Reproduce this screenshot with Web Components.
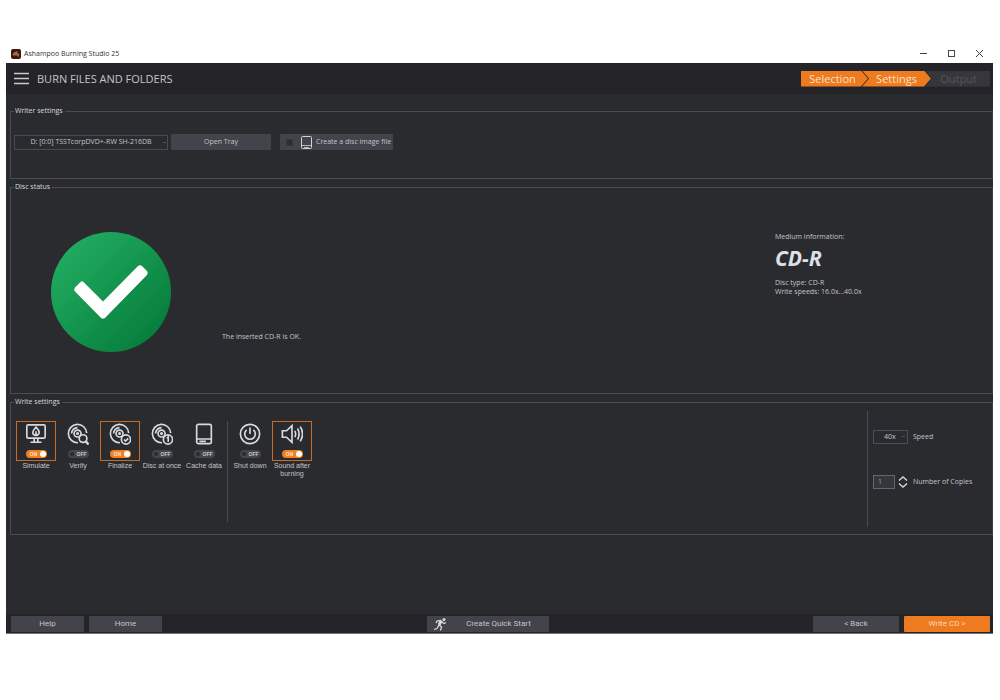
<!DOCTYPE html>
<html lang="en">
<head>
<meta charset="utf-8">
<title>Ashampoo Burning Studio 25</title>
<style>
  :root {
    --bg: #2a2b2f;
    --bar: #242428;
    --line: #4b4c51;
    --button: #42434b;
    --accent: #ee7b20;
    --text: #c3c4ca;
    --ui: "Open Sans", "Noto Sans", sans-serif;
    --control: Roboto, "Liberation Sans", sans-serif;
  }
  body { margin: 0; background: #fff; font: 7px/10px var(--ui); color: var(--text); }
</style>
</head>
<body>
<burn-window></burn-window>

<script>
const define = (name, html, setup) => {
  const template = document.createElement("template");
  template.innerHTML = html;
  customElements.define(name, class extends HTMLElement {
    constructor() {
      super();
      this.attachShadow({ mode: "open" }).append(template.content.cloneNode(true));
    }
    connectedCallback() {
      if (setup) setup(this, this.shadowRoot);
    }
  });
};

const ICONS = {
  simulate: `<rect x="2" y="2" width="20" height="14.5" rx="1.5"/><path d="M10 16.5v4M14 16.5v4M6 21h12"/><path d="M12 4.5c2.5 2.500 3.500 4 3.500 5.500a3.500 3.500 0 0 1-7 0c0-1.500 1.500-3 3.500-5.500z"/><path d="M12 9v4"/>`,
  verify: `<path d="M12 21.500A10 10 0 1 1 21.500 11"/><circle cx="11.500" cy="11.500" r="3.800"/><circle cx="11.500" cy="11.500" r=".8"/><path d="M5 11.500a6.500 6.500 0 0 1 6.500-6.500"/><circle cx="17.500" cy="17" r="4.200"/><path d="M20.500 20l3 3.500" stroke-width="2.600"/>`,
  finalize: `<path d="M12 21.500A10 10 0 1 1 21.500 11"/><circle cx="11.500" cy="11.500" r="3.800"/><circle cx="11.500" cy="11.500" r=".8"/><path d="M5 11.500a6.500 6.500 0 0 1 6.500-6.500"/><circle cx="18.500" cy="18" r="5"/><path d="M16.300 18l1.700 1.700 3-3"/>`,
  once: `<path d="M12 21.500A10 10 0 1 1 21.500 11"/><circle cx="11.500" cy="11.500" r="3.800"/><circle cx="11.500" cy="11.500" r=".8"/><path d="M5 11.500a6.500 6.500 0 0 1 6.500-6.500"/><circle cx="18.500" cy="18" r="5"/><path d="M17.300 16.500l1.500-1.200v5.400"/>`,
  cache: `<rect x="4" y="1.500" width="16" height="21" rx="2"/><path d="M4 17.500h16M7 20h7"/>`,
  power: `<circle cx="12" cy="12" r="10.500"/><path d="M12 5v7M8.300 7.500a5.800 5.800 0 1 0 7.400 0"/>`,
  sound: `<path d="M1.500 8.500h4.500l6-5.500v18l-6-5.500H1.500z"/><path d="M15 8.500q2 3.500 0 7M18 6q3.500 6 0 12M21 4q5 8 0 16"/>`
};

define("title-bar", `
<style>
  :host { display: flex; align-items: center; height: 19px; padding: 0 0 0 5px; background: #fff; color: #333; }
  svg { display: block; }
  h1 { flex: 1; margin: 0 0 0 3px; font: inherit; }
  button { width: 28px; height: 19px; padding: 0; border: 0; background: none; display: grid; place-items: center; }
</style>
<svg width="10" height="10" viewBox="0 0 10 10" aria-hidden="true"><rect width="10" height="10" rx="2" fill="#3a1a10"/><path d="M2 7q-1-3 2-4l2-1q0 2 2 3 1 2-1 3l-1-2-1 1-1-1z" fill="#b5653a"/></svg>
<h1>Ashampoo Burning Studio 25</h1>
<button aria-label="Minimize"><svg width="9" height="9" viewBox="0 0 9 9"><path d="M1 4.500h7" stroke="#444"/></svg></button>
<button aria-label="Maximize"><svg width="9" height="9" viewBox="0 0 9 9"><rect x="1.500" y="1.500" width="6" height="6" fill="none" stroke="#444"/></svg></button>
<button aria-label="Close"><svg width="9" height="9" viewBox="0 0 9 9"><path d="M1 1l7 7M8 1l-7 7" stroke="#444"/></svg></button>
`);

define("wizard-step", `
<style>
  :host { display: block; font-size: 11px; line-height: 16px; }
  a { display: grid; place-items: center; height: 16px; width: 67px; margin-right: -6px; padding-right: 4px; box-sizing: border-box;
      background: var(--accent); color: #fbe0c6; text-decoration: none;
      clip-path: polygon(0 0, calc(100% - 7px) 0, 100% 50%, calc(100% - 7px) 100%, 0 100%); }
  :host([middle]) a { width: 69px; padding: 0; clip-path: polygon(0 0, calc(100% - 7px) 0, 100% 50%, calc(100% - 7px) 100%, 0 100%, 7px 50%); }
  :host([last]) a { width: 65px; margin-right: 0; padding: 0 0 0 2px; background: #36373d; color: #54555b;
      clip-path: polygon(0 0, 100% 0, 100% 100%, 0 100%, 7px 50%); }
</style>
<a href="#"><slot></slot></a>
`);

define("app-header", `
<style>
  :host { display: flex; align-items: center; height: 31px; padding: 0 3px 0 8px; background: var(--bar); }
  .menu { width: 15px; height: 13px; padding: 0; border: 0; background: none; }
  svg { display: block; }
  h2 { flex: 1; margin: 0 0 0 8px; font-size: 11px; line-height: 16px; font-weight: 400; }
  nav { display: flex; }
</style>
<button class="menu" aria-label="Menu"><svg width="15" height="13" viewBox="0 0 15 13"><path d="M0 1.500h15M0 6.500h15M0 11.500h15" stroke="#c9c9d0" stroke-width="1.400"/></svg></button>
<h2>BURN FILES AND FOLDERS</h2>
<nav><wizard-step>Selection</wizard-step><wizard-step middle>Settings</wizard-step><wizard-step last>Output</wizard-step></nav>
`);

define("setting-group", `
<style>
  :host { display: block; margin-left: 4px; }
  fieldset { margin: 0; padding: 0 0 0 3px; border: 1px solid var(--line); border-right-color: #3c3d42; min-width: 0; box-sizing: border-box; min-height: var(--group-height); }
  legend { padding: 0 2px 0 1px; line-height: 10px; color: #d8d9de; }
</style>
<fieldset><legend></legend><slot></slot></fieldset>
`, (el, root) => { root.querySelector("legend").textContent = el.getAttribute("label"); });

define("push-button", `
<style>
  :host { display: block; }
  button { display: grid; grid-template-columns: 1fr; place-items: center; width: 100%; height: 16px; padding: 0; border: 0; border-radius: 1px;
           background: var(--button); color: var(--text); font: 8px/10px var(--control); }
  :host([plain]) button { font: 7px/10px var(--ui); }
  :host([primary]) button { background: var(--accent); color: #fbd9ba; }
  :host([icon]) button { grid-template-columns: 26px 1fr; padding-right: 4px; }
</style>
<button><slot name="icon"></slot><slot></slot></button>
`);

define("drive-panel", `
<style>
  :host { display: flex; align-items: center; padding-top: 18px; }
  select { appearance: none; width: 154px; height: 15px; margin: 0; padding: 0 14px; border: 1px solid #4a4b51; border-radius: 0;
           color: var(--text); font: 7px/10px var(--ui); text-align: center; text-align-last: center;
           background: linear-gradient(#55565c, #55565c) 148px 6px / 3px 1px no-repeat var(--bg); }
  push-button { width: 100px; margin-left: 3px; }
  label { display: flex; align-items: center; height: 16px; margin-left: 9px; padding: 0 2px 0 6px; border-radius: 1px; background: var(--button); }
  input { appearance: none; width: 7px; height: 7px; margin: 0 8px 0 0; background: #2e2f34; border: 1px solid #37383d; }
  svg { margin-right: 4px; }
</style>
<select aria-label="Drive"><option>D: [0:0] TSSTcorpDVD+-RW SH-216DB</option></select>
<push-button plain>Open Tray</push-button>
<label><input type="checkbox"><svg width="11" height="13" viewBox="0 0 11 13" fill="none" stroke="#d2d3d8"><rect x=".5" y=".5" width="10" height="12" rx="1"/><path d="M1 9.500h9M3 11.500h5" stroke-width=".8"/></svg>Create a disc image file</label>
`);

define("disc-status", `
<style>
  :host { display: flex; padding: 40px 0 0 37px; }
  svg { display: block; flex: none; }
  p { margin: 0; }
  .message { flex: 1; align-self: flex-end; margin-left: 51px; padding-bottom: 10px; }
  .info { width: 217px; line-height: 9px; }
  strong { display: block; margin: 4px 0 7px; font: italic 700 21px/26px "Noto Sans", var(--ui); color: #dfe0e6; }
</style>
<svg width="120" height="120" viewBox="0 0 120 120" role="img" aria-label="OK">
  <defs><linearGradient id="g" x1="0" y1="0" x2="1" y2="1"><stop offset=".1" stop-color="#21ad61"/><stop offset=".9" stop-color="#067c3a"/></linearGradient></defs>
  <circle cx="60" cy="60" r="60" fill="url(#g)"/>
  <path d="M28 54L52 80 93 39" fill="none" stroke="#04662d" stroke-opacity=".25" stroke-width="13"/>
  <path d="M24 55.500l5.500-5.500q1.500-1.300 3 0L52 69.500 87 34q2-1.500 4 0l5 5q1.500 2 0 4L54 86q-2 1.500-4 0L24 59.500q-1.500-2 0-4z" fill="#fff"/>
</svg>
<p class="message">The inserted CD-R is OK.</p>
<div class="info"><p>Medium information:</p><strong>CD-R</strong><p>Disc type: CD-R</p><p>Write speeds: 16.0x...40.0x</p></div>
`);

define("option-tile", `
<style>
  :host { display: block; width: 42px; }
  label { display: flex; flex-direction: column; align-items: center; }
  .frame { position: relative; box-sizing: border-box; width: 40px; height: 40px; padding-top: 1px; border: 1px solid transparent;
           display: flex; flex-direction: column; align-items: center; gap: 5px; }
  :host([on]) .frame { border-color: #c96b22; }
  svg { display: block; fill: none; stroke: #d9dae0; stroke-width: 1.8; }
  input { position: absolute; inset: 0; width: 100%; height: 100%; margin: 0; opacity: 0; }
  .pill { box-sizing: border-box; width: 21px; height: 8px; padding: 0 2px; border-radius: 4px; background: #44454d; color: #c8c9cf;
          display: flex; align-items: center; justify-content: space-between; font: 700 5px/8px "Liberation Sans", sans-serif; }
  .pill::before { content: ""; width: 4px; height: 4px; border-radius: 50%; background: #2a2b2f; }
  :host([on]) .pill { flex-direction: row-reverse; padding: 0 1px 0 4px; background: #f08020; color: #ffe3c8; }
  :host([on]) .pill::before { width: 6px; height: 6px; background: #fff; }
  .name { width: 40px; margin-top: 1px; font: 7px/8px "Liberation Sans", sans-serif; text-align: center; }
</style>
<label><span class="frame"><svg width="22" height="22" viewBox="0 0 24 24" aria-hidden="true"></svg><span class="pill"><span class="state"></span></span><input type="checkbox"></span><span class="name"><slot></slot></span></label>
`, (el, root) => {
  const on = el.hasAttribute("on");
  root.querySelector("svg").innerHTML = ICONS[el.getAttribute("icon")];
  root.querySelector(".state").textContent = on ? "ON" : "OFF";
  const box = root.querySelector("input");
  box.checked = on;
  box.onchange = () => {
    el.toggleAttribute("on", box.checked);
    root.querySelector(".state").textContent = box.checked ? "ON" : "OFF";
  };
});

define("write-options", `
<style>
  :host { display: flex; padding: 4px 0 6px; }
  .tiles { flex: 1; display: flex; padding: 10px 0 5px 1px; }
  .rest { display: flex; margin-left: 2px; padding-left: 1px; border-left: 1px solid var(--line); }
  .side { box-sizing: border-box; width: 125px; min-height: 116px; padding: 18px 0 0 5px; border-left: 1px solid var(--line);
          display: grid; grid-template-columns: 35px 1fr; grid-auto-rows: 15px; align-content: start; align-items: center; gap: 30px 5px; }
  select { appearance: none; box-sizing: border-box; width: 35px; height: 14px; padding: 0 8px 0 10px; margin: 0; border: 1px solid #4c4d57; border-radius: 0;
           background: linear-gradient(#55565c, #55565c) 28px 5px / 3px 1px no-repeat #2a2b32; color: var(--text); font: 7px/10px var(--ui); }
  .count { display: flex; align-items: center; gap: 3px; }
  input { appearance: none; box-sizing: border-box; width: 22px; height: 14px; padding: 0 4px; border: 1px solid #65666b; border-radius: 0; background: #36373c; color: #a2a3a8; font: 7px/10px var(--ui); }
  .spin { display: grid; gap: 2px; }
  .spin button { display: block; height: 5px; padding: 0; border: 0; background: none; }
  svg { display: block; }
</style>
<div class="tiles">
  <option-tile icon="simulate" on>Simulate</option-tile>
  <option-tile icon="verify">Verify</option-tile>
  <option-tile icon="finalize" on>Finalize</option-tile>
  <option-tile icon="once">Disc at once</option-tile>
  <option-tile icon="cache">Cache data</option-tile>
  <div class="rest">
    <option-tile icon="power">Shut down</option-tile>
    <option-tile icon="sound" on>Sound after burning</option-tile>
  </div>
</div>
<div class="side">
  <select id="speed"><option>40x</option></select><label for="speed">Speed</label>
  <div class="count"><input id="copies" type="text" value="1"><span class="spin">
    <button aria-label="More"><svg width="10" height="5" viewBox="0 0 10 5"><path d="M1 4.500l4-3.500 4 3.500" fill="none" stroke="#d5d6da" stroke-width="1.400"/></svg></button>
    <button aria-label="Fewer"><svg width="10" height="5" viewBox="0 0 10 5"><path d="M1 .5l4 3.500 4-3.500" fill="none" stroke="#d5d6da" stroke-width="1.400"/></svg></button></span></div>
  <label for="copies">Number of Copies</label>
</div>
`);

define("app-footer", `
<style>
  :host { display: flex; align-items: center; justify-content: space-between; height: 19px; padding: 0 3px 0 5px; background: var(--bar); border-bottom: 1px solid #77706f; }
  div { display: flex; gap: 5px; }
  .nav { width: 73px; }
  .wide { width: 86px; }
  .quick { width: 122px; }
</style>
<div><push-button class="nav">Help</push-button><push-button class="nav">Home</push-button></div>
<push-button class="quick" icon><svg slot="icon" width="14" height="14" viewBox="0 0 14 14" aria-hidden="true"><circle cx="11" cy="2.500" r="1.500" fill="#d8d9de"/><path d="M8.500 3.500L6 8" fill="none" stroke="#d8d9de" stroke-width="3"/><path d="M8 3.500l-4 .5-1 2M9 5l2 1.500 2-1M6 8l2.500 2-1 3.500M6 8l-2 3.500-3 1" fill="none" stroke="#d8d9de" stroke-width="1.300"/></svg>Create Quick Start</push-button>
<div><push-button class="wide">&lt; Back</push-button><push-button class="wide" primary>Write CD &gt;</push-button></div>
`);

define("burn-window", `
<style>
  :host { display: flex; flex-direction: column; box-sizing: border-box; min-height: 100vh; padding: 44px 7px 66px 6px; }
  .app { flex: 1; display: flex; flex-direction: column; background: var(--bg); }
  main { flex: 1; display: flex; flex-direction: column; gap: 3px; padding: 12px 0 20px; }
  .writer { --group-height: 73px; }
  .status { --group-height: 212px; }
  .options { --group-height: 138px; }
</style>
<title-bar></title-bar>
<div class="app">
  <app-header></app-header>
  <main>
    <setting-group class="writer" label="Writer settings"><drive-panel></drive-panel></setting-group>
    <setting-group class="status" label="Disc status"><disc-status></disc-status></setting-group>
    <setting-group class="options" label="Write settings"><write-options></write-options></setting-group>
  </main>
  <app-footer></app-footer>
</div>
`);
</script>
</body>
</html>
